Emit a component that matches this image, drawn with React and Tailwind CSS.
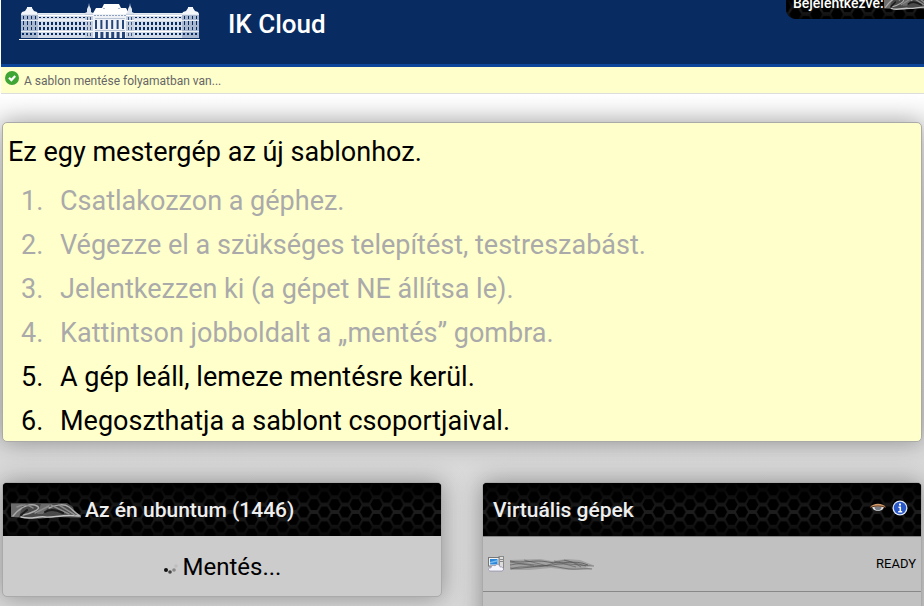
import React from "react";

const range = (n) => Array.from({ length: n }, (_, i) => i);

function Wing({ x, count }) {
  return (
    <g>
      <path d={`M${x} 13.500h${count * 4 + 1}`} stroke="#e3e9f1" />
      <rect x={x} y="14" width={count * 4 + 1} height="24" fill="#d3dce8" />
      {range(count).map((i) => (
        <g key={i} fill="#082c61">
          <rect x={x + 1 + i * 4} y="17" width="2" height="1" />
          <rect x={x + 1 + i * 4} y="22" width="2" height="3" />
          <rect x={x + 1 + i * 4} y="27" width="2" height="3" />
          <rect x={x + 1 + i * 4} y="33" width="2" height="2" />
        </g>
      ))}
      <path d={`M${x} 15.500h${count * 4 + 1}M${x} 20h${count * 4 + 1}M${x} 31.500h${count * 4 + 1}`} stroke="#fff" />
    </g>
  );
}

function Pavilion({ x }) {
  return (
    <g>
      <path d={`M${x} 14l1-2 3-1 2-3v-1h5v1l2 3 3 1 1 2z`} fill="#f3f6fa" />
      <rect x={x} y="14" width="17" height="24" fill="#a9b8cf" />
      {range(4).map((i) => (
        <g key={i} fill="#082c61">
          <rect x={x + 2 + i * 4} y="16" width="1" height="3" />
          <rect x={x + 2 + i * 4} y="21" width="1" height="4" />
          <rect x={x + 2 + i * 4} y="27" width="1" height="3" />
          <rect x={x + 1 + i * 4} y="33" width="2" height="2" />
        </g>
      ))}
      <path d={`M${x} 14.500h17M${x} 20.500h17M${x} 31.500h17`} stroke="#e3e9f1" />
    </g>
  );
}

function Tower({ x }) {
  return (
    <g>
      <path d={`M${x} 15v-2l2-1v-3l1.500-3 .5-3 .5 3 1.500 3v3l2 1v2z`} fill="#dfe6f0" />
      <rect x={x} y="14" width="8" height="24" fill="#c5cfde" />
      {[17, 22, 27, 33].map((y) => (
        <path key={y} d={`M${x + 2.5} ${y}v3M${x + 5.5} ${y}v3`} stroke="#3a5684" />
      ))}
      <path d={`M${x} 15.500h8M${x} 20.500h8M${x} 31.500h8`} stroke="#fff" />
    </g>
  );
}

function BuildingLogo() {
  return (
    <svg className="block h-[42px] w-[182px]" viewBox="0 0 182 42" role="img" aria-label="Főépület">
      <Wing x={19} count={12} />
      <Wing x={115} count={12} />
      <Pavilion x={2} />
      <Pavilion x={163} />
      <path d="M73 15l4-7h6l2-4h15l2 4h5l4 7z" fill="#fff" />
      <path d="M84 8.500h2M99 8.500h2" stroke="#a9b8cf" />
      <rect x="74" y="14" width="34" height="24" fill="#eef2f7" />
      <path d="M75 15.500h32" stroke="#8fa2bf" strokeDasharray="2 1" />
      {range(6).map((i) => (
        <rect key={i} x={76 + i * 5.4} y="20" width="2" height="9" fill="#26467a" />
      ))}
      {range(6).map((i) => (
        <rect key={i} x={76 + i * 5.4} y="32" width="3" height="6" fill="#26467a" />
      ))}
      <path d="M76 18.500h30M76 30.500h30" stroke="#b8c4d6" />
      <Tower x={66} />
      <Tower x={107} />
      <path d="M0 39.500h181" stroke="#fff" strokeWidth="1" />
    </svg>
  );
}

function HexBackdrop({ id }) {
  return (
    <svg className="absolute inset-0 h-full w-full" aria-hidden="true">
      <defs>
        <linearGradient id={`${id}-v`} x1="0" y1="0" x2="0" y2="1">
          <stop offset="0" stopColor="#020202" />
          <stop offset="0.55" stopColor="#1e1e1e" />
          <stop offset="1" stopColor="#080808" />
        </linearGradient>
        <pattern id={`${id}-p`} x="9.4" y="-0.6" width="20.8" height="14.8" patternUnits="userSpaceOnUse">
          <path
            d="M4.4 7.4l3-5.4h6l3 5.4-3 5.4h-6zM-6 0l3-5.4h6L6 0 3 5.4h-6zM14.8 0l3-5.4h6l3 5.4-3 5.4h-6zM-6 14.8l3-5.4h6l3 5.4-3 5.4h-6zM14.8 14.8l3-5.4h6l3 5.4-3 5.4h-6z"
            fill="#000"
          />
        </pattern>
      </defs>
      <rect width="100%" height="100%" fill={`url(#${id}-v)`} />
      <rect width="100%" height="100%" fill={`url(#${id}-p)`} />
    </svg>
  );
}

function LightScribble({ className }) {
  return (
    <svg className={className} viewBox="0 0 70 18" preserveAspectRatio="none" aria-hidden="true">
      <path d="M0 1h56l6 4 2 6 6 3v2l-26-1-16 2-28-2z" fill="#4a4a4a" />
      <path d="M0 2h12l-4 13H0zM30 2h10l-8 10h-6z" fill="#6c6c6c" />
      <g fill="none" strokeLinecap="round">
        <path d="M2 14c8-10 18-13 24-10s-8 8-14 9M38 6c8-4 16-4 20-1s6 6 11 9" stroke="#aaa" strokeWidth="1.500" />
        <path d="M10 15c10 3 16-1 24 0s18-3 34-1" stroke="#c4c4c4" strokeWidth="1.500" />
        <path d="M6 5c6-3 12-2 16 1M40 3l18 9M48 3l16 10M24 11l14-7" stroke="#8c8c8c" strokeWidth="1.500" />
        <path d="M16 8l-6 5M34 10c6-4 12-2 18 1" stroke="#1c1c1c" strokeWidth="2" />
      </g>
    </svg>
  );
}

function DarkScribble({ className }) {
  return (
    <svg className={className} viewBox="0 0 84 16" preserveAspectRatio="none" aria-hidden="true">
      <path d="M0 4l30-1 12 2 14-2 14 1 13 5-8 2 8 2-24 1-18-2-22 2H0z" fill="#8e8e8e" opacity=".6" />
      <g fill="none" stroke="#555" strokeWidth=".8">
        <path d="M0 5c14 3 24-2 38 1s26-3 40 3" />
        <path d="M0 9c18-4 26 3 42 0s28 1 42 1" opacity=".8" />
        <path d="M0 12c14 2 30-5 48-1s20 1 34 2" opacity=".8" />
        <path d="M1 13c12-5 24 1 40-5s20-3 30 3" opacity=".7" />
        <path d="M0 6l24 4M14 4l24 6M44 5l22 6M54 4l22 6" opacity=".7" />
      </g>
    </svg>
  );
}

function CheckIcon() {
  return (
    <svg className="h-[14px] w-[14px] shrink-0" viewBox="0 0 14 14" aria-hidden="true">
      <circle cx="7" cy="7" r="7" fill="#3fa535" />
      <path d="M4 6.700l2.400 2.400L10.200 5" fill="none" stroke="#fff" strokeWidth="2.200" />
    </svg>
  );
}

function Spinner() {
  return (
    <svg className="h-4 w-4" viewBox="0 0 16 16" aria-hidden="true">
      <circle cx="3" cy="11" r="2" fill="#111" />
      <circle cx="7" cy="13" r="1.800" fill="#444" />
      <circle cx="11" cy="11" r="1.800" fill="#888" />
      <circle cx="13" cy="7" r="1.800" fill="#bebebe" />
    </svg>
  );
}

function EyeIcon() {
  return (
    <svg className="block h-4 w-4" viewBox="0 0 16 16" aria-hidden="true">
      <path d="M2 7c3-1 9-1 12 0-1 3-3.500 4-6 4S3 10 2 7z" fill="#ddd" />
      <path d="M4.500 6.500h7c0 2.500-1.500 4-3.500 4s-3.500-1.500-3.500-4z" fill="#777b84" />
      <path d="M0 7.500c3-5 13-5 16 0-4-1.600-12-1.600-16 0z" fill="#d09a6a" />
      <path d="M1 7.200c4-1.700 10-1.700 14 0" fill="none" stroke="#5a2d12" strokeWidth=".8" />
    </svg>
  );
}

function InfoIcon() {
  return (
    <svg className="block h-4 w-4" viewBox="0 0 16 16" aria-hidden="true">
      <circle cx="8" cy="8" r="7.500" fill="#dce4f5" />
      <circle cx="8" cy="8" r="6.200" fill="#2857c8" />
      <path d="M8 3.500v2" stroke="#fff" strokeWidth="2" />
      <path d="M6.500 7.200H8.300v4.300M6.200 11.800h4" fill="none" stroke="#fff" strokeWidth="1.500" />
    </svg>
  );
}

function ComputerIcon() {
  return (
    <svg className="h-4 w-4 shrink-0" viewBox="0 0 16 16" aria-hidden="true">
      <rect x="11" y=".5" width="4.500" height="13" fill="#ddd" stroke="#8a8a8a" />
      <path d="M12 3.500h3M12 5.500h3" stroke="#888" />
      <rect x=".5" y="1.500" width="10.500" height="8.500" fill="#f2f2f2" stroke="#777" />
      <rect x="2" y="3" width="7.500" height="5.500" fill="#2d87d8" />
      <path d="M2 6l7.500-2v1.500L2 7.500z" fill="#7bbdf0" />
      <path d="M2 15c-3-1-1-4 1-3 0-3 3-3 4-2 2-3 5-1 5 1 3-1 5 3 2 4z" fill="#f6f6fc" stroke="#8888a8" strokeWidth=".7" />
    </svg>
  );
}

const steps = [
  { text: "Csatlakozzon a géphez.", done: true },
  { text: "Végezze el a szükséges telepítést, testreszabást.", done: true },
  { text: "Jelentkezzen ki (a gépet NE állítsa le).", done: true },
  { text: "Kattintson jobboldalt a „mentés” gombra.", done: true },
  { text: "A gép leáll, lemeze mentésre kerül.", done: false },
  { text: "Megoszthatja a sablont csoportjaival.", done: false },
];

export default function App() {
  return (
    <div className="flex h-screen flex-col overflow-hidden bg-white font-['Roboto','Noto_Sans',sans-serif] text-black">
      <header className="relative ml-px flex h-[67px] shrink-0 items-start border-b-[3px] border-[#0d4598] bg-[#082c61] pl-[18px]">
        <BuildingLogo />
        <h1 className="ml-[27px] mt-1 text-[26px] font-medium leading-10 text-white">IK Cloud</h1>
        <div className="absolute right-0 top-0 flex h-[19px] w-[138px] items-end overflow-hidden rounded-bl-[10px] bg-black pb-2 pl-[7px] text-white">
          <HexBackdrop id="user" />
          <span className="relative text-sm font-medium leading-4">Bejelentkezve:</span>
          <LightScribble className="relative h-4 w-[50px] shrink-0" />
        </div>
      </header>

      <div role="status" className="ml-px flex h-[27px] shrink-0 items-start gap-[5px] border-b border-[#ddd] bg-[#ffffcc] pl-1 pt-1 text-xs text-[#666]">
        <CheckIcon />
        <span className="leading-5">A sablon mentése folyamatban van...</span>
      </div>

      <main className="flex-1 bg-linear-to-b from-white via-[#dcdcdc] via-20% to-[#d8d8d8] px-[2px] pt-7">
        <section className="rounded-[5px] border border-[#aaa] bg-[#ffffcc] px-[5px] pt-2 text-[27px] shadow-[0_0_25px_rgba(0,0,0,0.35)]">
          <p className="leading-[42px]">Ez egy mestergép az új sablonhoz.</p>
          <ol className="-mb-[2px] mt-[6px]">
            {steps.map((step, i) => (
              <li key={step.text} className={step.done ? "flex leading-[44px] text-[#aaa]" : "flex leading-[44px]"}>
                <span className="w-[52px] shrink-0 pl-[13px]">{i + 1}.</span>
                <span>{step.text}</span>
              </li>
            ))}
          </ol>
        </section>

        <div className="mt-10 grid grid-cols-2 items-start gap-10">
          <section className="overflow-hidden rounded-[5px] border border-[#aaa] bg-[#ccc] shadow-[0_0_25px_rgba(0,0,0,0.35)]">
            <header className="relative flex h-[53px] items-center bg-black pl-2 pt-[2px]">
              <HexBackdrop id="left" />
              <LightScribble className="relative h-[18px] w-[70px]" />
              <h2 className="relative ml-1 text-[21px] font-medium text-[#eee]">Az én ubuntum (1446)</h2>
            </header>
            <div className="flex h-[60px] items-center justify-center gap-1 pt-px text-2xl">
              <Spinner />
              <span>Mentés...</span>
            </div>
          </section>

          <section className="overflow-hidden rounded-[5px] border border-[#aaa] bg-[#c1c1c1] shadow-[0_0_25px_rgba(0,0,0,0.35)]">
            <header className="relative flex h-[53px] items-center justify-between bg-black pl-[10px] pr-[13px] pt-[2px]">
              <HexBackdrop id="right" />
              <h2 className="relative text-[21px] font-medium text-[#eee]">Virtuális gépek</h2>
              <div className="relative flex gap-[6px] pb-[6px]">
                <button type="button" aria-label="Megjelenítés"><EyeIcon /></button>
                <button type="button" aria-label="Információ"><InfoIcon /></button>
              </div>
            </header>
            <ul>
              <li className="flex h-[56px] items-center border-y border-[#888] px-[5px]">
                <ComputerIcon />
                <DarkScribble className="ml-[6px] h-4 w-[84px]" />
                <span className="ml-auto text-[13px]">READY</span>
              </li>
              <li className="h-14" />
            </ul>
          </section>
        </div>
      </main>
    </div>
  );
}
